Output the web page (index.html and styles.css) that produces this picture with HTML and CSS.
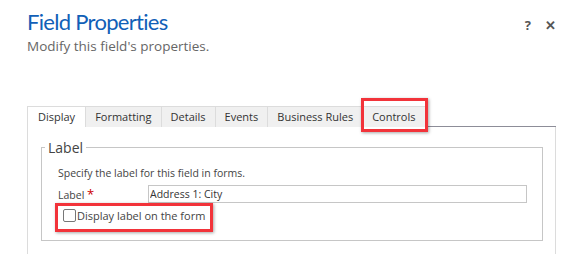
FILE: index.html
```html
<!DOCTYPE html>
<html lang="en">
<head>
    <meta charset="UTF-8" />
    <title>Field Properties</title>
    <link rel="stylesheet" href="styles.css">
</head>
<body>
<div class="dialog">
    <header class="dialog-header">
        <div class="titles">
            <h1>Field Properties</h1>
            <p class="subtitle">Modify this field's properties.</p>
        </div>
        <div class="header-actions">
            <span class="help">?</span>
            <span class="close">&#x2715;</span>
        </div>
    </header>

    <div class="tab-strip">
        <div class="tab active">Display</div>
        <div class="tab">Formatting</div>
        <div class="tab">Details</div>
        <div class="tab">Events</div>
        <div class="tab">Business Rules</div>
        <div class="tab tab-marked">Controls</div>
        <div class="tab-fill"></div>
    </div>

    <div class="tab-panel">
        <fieldset class="group">
            <legend>Label</legend>
            <div class="group-body">
                <p class="hint">Specify the label for this field in forms.</p>
                <div class="field-row">
                    <label class="field-label">Label <span class="req">*</span></label>
                    <input class="field-input" type="text" value="Address 1: City">
                </div>
                <div class="check-row">
                    <span class="marker">
                        <span class="checkbox"></span>Display label on the form
                    </span>
                </div>
            </div>
        </fieldset>
    </div>
</div>
</body>
</html>
```

FILE: styles.css
```css
body {
    margin: 0;
    background: #fff;
    font-family: 'Open Sans', 'Noto Sans', sans-serif;
    color: #444;
}

.dialog {
    padding: 0 15px 0 27px;
}

.dialog-header {
    display: flex;
    justify-content: space-between;
    align-items: flex-start;
    height: 97px;
}

h1 {
    margin: 6px 0 0;
    font-family: Lato, 'Open Sans', sans-serif;
    font-size: 22px;
    font-weight: 400;
    line-height: 31px;
    letter-spacing: -0.7px;
    color: #1160b7;
}

.subtitle {
    margin: 0;
    font-size: 13.5px;
    color: #666;
}

.header-actions {
    display: flex;
    gap: 14px;
    margin-top: 16px;
    font-size: 13px;
    font-weight: 700;
    color: #555;
}

.close {
    font-size: 13px;
}

.tab-strip {
    display: flex;
    align-items: flex-end;
    height: 30px;
}

.tab {
    height: 20px;
    line-height: 19px;
    padding: 0 9px;
    font-size: 11px;
    background: #f0f0f0;
    border: 1px solid #dcdcdc;
    border-bottom: none;
    border-left: none;
    color: #333;
}

.tab.active {
    background: #fff;
    border-left: 1px solid #dcdcdc;
    padding: 0 10px;
}

.tab-marked {
    position: relative;
}

.tab-marked::after {
    content: "";
    position: absolute;
    left: -2px;
    right: -3px;
    top: -9px;
    bottom: -5px;
    border: 3px solid #f2333a;
    box-shadow: 1px 1px 3px rgba(0, 0, 0, 0.35);
}

.tab-fill {
    flex: 1;
    border-bottom: 1px solid #8d8d98;
    height: 19px;
}

.tab-panel {
    border-left: 1px solid #dcdcdc;
    border-right: 1px solid #dcdcdc;
    padding: 11px 12px 13px 13px;
    height: 110px;
}

.group {
    margin: 0;
    padding: 0 15px 0 3px;
    border: 1px solid #c6c6c6;
    height: 101px;
}

.group legend {
    padding: 0 3px;
    font-size: 14px;
    color: #444;
}

.group-body {
    padding-left: 13px;
}

.hint {
    margin: 9px 0 5px;
    font-size: 10.5px;
}

.field-row {
    display: flex;
    align-items: center;
}

.field-label {
    width: 90px;
    font-size: 10.5px;
}

.req {
    color: #c00;
    font-size: 13px;
}

.field-input {
    flex: 1;
    height: 16px;
    padding: 0 1px;
    border: 1px solid #c6c6c6;
    font-family: inherit;
    font-size: 10.5px;
    color: #333;
}

.check-row {
    margin-top: 0;
}

.marker {
    position: relative;
    display: inline-flex;
    align-items: center;
    padding: 5px 0 5px 5px;
    font-size: 11px;
    color: #444;
}

.marker::after {
    content: "";
    position: absolute;
    left: -3px;
    right: -8px;
    top: 0;
    bottom: -4px;
    border: 3px solid #f2333a;
    box-shadow: 1px 1px 3px rgba(0, 0, 0, 0.35);
}

.checkbox {
    width: 11px;
    height: 11px;
    border: 1px solid #777;
    border-radius: 2px;
    margin-right: 1px;
}
```
